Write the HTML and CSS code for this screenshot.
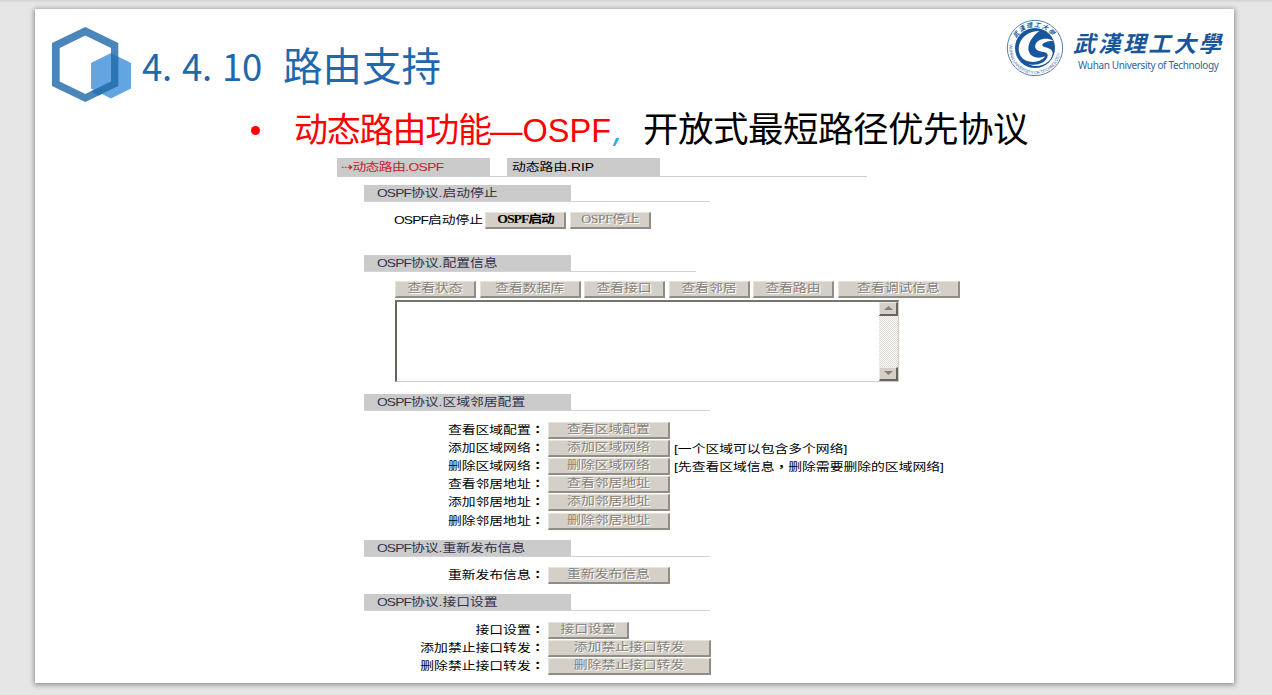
FILE: index.html
```html
<!DOCTYPE html>
<html lang="zh-CN">
<head>
<meta charset="utf-8">
<title>4.4.10 路由支持</title>
<link rel="stylesheet" href="styles.css">
</head>
<body>
<main class="slide">
  <header class="head">
    <svg class="hex" width="82" height="78" viewBox="0 0 82 78">
      <path fill="#4a86ba" fill-rule="evenodd" d="M34.300 1L67.300 17V60L34.300 76L1 60V17ZM34.300 9.500L8.700 22V55.500L34.300 68L60 55.500V22Z"/>
      <path fill="#62a5e1" d="M60 27L80 37V62.500L60 72.500L40 62.500V37Z"/>
      <path fill="#2d74b4" d="M60 27L67.300 30.750V60L47.500 69.500L40 65.300L60 55.500Z"/>
    </svg>
    <h1 class="title"><span class="cell">4</span><span class="cell">.</span><span class="cell">4</span><span class="cell">.</span><span class="cell">1</span><span class="cell">0</span><span class="han">路由支持</span></h1>
    <div class="brand">
      <svg class="seal" width="58" height="58" viewBox="0 0 174 174">
        <defs>
          <path id="arcTop" d="M31 58A63 63 0 0 1 143 58"/>
          <path id="arcLow" d="M11 76A77 77 0 1 0 163 76"/>
        </defs>
        <circle cx="87" cy="87" r="83" fill="#fff" stroke="#5681b4" stroke-width="3"/>
        <circle cx="87" cy="87" r="60" fill="#17569c"/>
        <path fill="#fff" d="M100 36C66 36 39 58 38 88C38 104 45 117 58 124C80 134 108 128 117 112C98 120 76 116 69 99C62 79 76 53 100 36Z"/>
        <path fill="#fff" d="M142 65C120 54 96 60 88 77C84 91 98 97 112 99C124 101 127 106 124 115C116 134 88 143 66 134C94 151 136 136 140 103C140 91 127 87 116 84C104 80 105 68 142 65Z"/>
        <text class="seal-top"><textPath href="#arcTop">武漢理工大學</textPath></text>
        <text class="seal-low"><textPath href="#arcLow">WUHAN UNIVERSITY OF TECHNOLOGY</textPath></text>
      </svg>
      <div class="names">
        <div class="cn">武漢理工大學</div>
        <div class="en">Wuhan University of Technology</div>
      </div>
    </div>
  </header>
  <div class="lead"><i class="dot"></i><span class="red">动态路由功能</span><span class="ospf">—OSPF</span><span class="comma">,</span><span class="black">开放式最短路径优先协议</span></div>

  <section class="panel">
    <nav class="tabs">
      <div class="tab active"><span class="t">⇢动态路由.OSPF</span></div>
      <div class="tab"><span class="t">动态路由.RIP</span></div>
    </nav>

    <h2 class="bar"><span class="t"><span class="latin">OSPF</span>协议.启动停止</span></h2>
    <div class="row start">
      <div class="lab"><span class="t"><span class="latin">OSPF</span>启动停止</span></div>
      <div class="btn on"><span class="t">OSPF启动</span></div>
      <div class="btn stop"><span class="t">OSPF停止</span></div>
    </div>

    <h2 class="bar short info"><span class="t"><span class="latin">OSPF</span>协议.配置信息</span></h2>
    <div class="row tools">
      <div class="btn"><span class="t">查看状态</span></div>
      <div class="btn w5"><span class="t">查看数据库</span></div>
      <div class="btn"><span class="t">查看接口</span></div>
      <div class="btn"><span class="t">查看邻居</span></div>
      <div class="btn"><span class="t">查看路由</span></div>
      <div class="btn w6"><span class="t">查看调试信息</span></div>
    </div>
    <div class="box">
      <div class="scroll">
        <div class="arrow"><svg width="9" height="4" viewBox="0 0 9 4"><path d="M0 4L4.500 0L9 4Z" fill="#848078"/></svg></div>
        <div class="arrow"><svg width="9" height="4" viewBox="0 0 9 4"><path d="M0 0L4.500 4L9 0Z" fill="#848078"/></svg></div>
      </div>
    </div>

    <h2 class="bar area"><span class="t"><span class="latin">OSPF</span>协议.区域邻居配置</span></h2>
    <div class="form">
      <div class="row"><div class="lab"><span class="t">查看区域配置<span class="mid" lang="zh-TW">：</span></span></div><div class="btn w6"><span class="t">查看区域配置</span></div></div>
      <div class="row"><div class="lab"><span class="t">添加区域网络<span class="mid" lang="zh-TW">：</span></span></div><div class="btn w6"><span class="t">添加区域网络</span></div><div class="note"><span class="t">[一个区域可以包含多个网络]</span></div></div>
      <div class="row"><div class="lab"><span class="t">删除区域网络<span class="mid" lang="zh-TW">：</span></span></div><div class="btn w6"><span class="t">删除区域网络</span></div><div class="note"><span class="t">[先查看区域信息<span class="mid" lang="zh-TW">，</span>删除需要删除的区域网络]</span></div></div>
      <div class="row"><div class="lab"><span class="t">查看邻居地址<span class="mid" lang="zh-TW">：</span></span></div><div class="btn w6"><span class="t">查看邻居地址</span></div></div>
      <div class="row"><div class="lab"><span class="t">添加邻居地址<span class="mid" lang="zh-TW">：</span></span></div><div class="btn w6"><span class="t">添加邻居地址</span></div></div>
      <div class="row"><div class="lab"><span class="t">删除邻居地址<span class="mid" lang="zh-TW">：</span></span></div><div class="btn w6"><span class="t">删除邻居地址</span></div></div>
    </div>

    <h2 class="bar pub"><span class="t"><span class="latin">OSPF</span>协议.重新发布信息</span></h2>
    <div class="form">
      <div class="row"><div class="lab"><span class="t">重新发布信息<span class="mid" lang="zh-TW">：</span></span></div><div class="btn w6"><span class="t">重新发布信息</span></div></div>
    </div>

    <h2 class="bar port"><span class="t"><span class="latin">OSPF</span>协议.接口设置</span></h2>
    <div class="form">
      <div class="row"><div class="lab"><span class="t">接口设置<span class="mid" lang="zh-TW">：</span></span></div><div class="btn"><span class="t">接口设置</span></div></div>
      <div class="row"><div class="lab"><span class="t">添加禁止接口转发<span class="mid" lang="zh-TW">：</span></span></div><div class="btn w8"><span class="t">添加禁止接口转发</span></div></div>
      <div class="row"><div class="lab"><span class="t">删除禁止接口转发<span class="mid" lang="zh-TW">：</span></span></div><div class="btn w8"><span class="t">删除禁止接口转发</span></div></div>
    </div>
  </section>
</main>
</body>
</html>
```
FILE: styles.css
```css
* { box-sizing: border-box; }
body {
  margin: 0;
  height: 695px;
  overflow: hidden;
  padding: 9px 0 0 35px;
  background: linear-gradient(#d2d2d2, #e6e6e6 3px);
  font-family: "Liberation Sans", "Noto Sans CJK SC", sans-serif;
}
.slide {
  width: 1199px;
  height: 674px;
  background: #fff;
  box-shadow: 0 1px 5px 1px rgba(0, 0, 0, .38);
}
.head { display: flex; height: 92px; padding-left: 16px; }
.hex { margin-top: 17px; flex: none; }
.title {
  display: flex;
  align-items: baseline;
  flex: none;
  width: 330px;
  margin: 27px 0 0 9px;
  height: 56px;
  font: 400 36.5px/56px "Noto Sans CJK SC", sans-serif;
  color: #1f68ab;
}
.cell { width: 20px; flex: none; }
.han { font-size: 39.5px; margin-left: 21px; white-space: nowrap; }
.brand { display: flex; flex: none; margin: 10px 0 0 534px; color: #17569c; }
.seal { flex: none; }
.seal-top { font: italic 700 18px "Noto Sans CJK SC", sans-serif; letter-spacing: 4px; fill: #17569c; }
.seal-low { font: 13px "Liberation Sans", sans-serif; letter-spacing: -.2px; fill: #3a6ba6; }
.names { margin-left: 9px; width: 160px; }
.cn {
  font: italic 700 22.5px/30px "Noto Sans CJK SC", sans-serif;
  letter-spacing: 2.6px;
  margin-top: 8px;
  white-space: nowrap;
}
.en {
  font: 10px/14px "Noto Sans", sans-serif;
  margin: 1px 0 0 5px;
  letter-spacing: -.36px;
  white-space: nowrap;
  color: #2e659f;
}
.lead {
  display: flex;
  align-items: baseline;
  height: 50px;
  line-height: 52px;
  padding-left: 216px;
  white-space: nowrap;
}
.dot { align-self: flex-start; width: 9px; height: 9px; margin: 25px 34px 0 0; border-radius: 50%; background: #f00; }
.red { width: 196px; font: 34px/52px "Noto Sans CJK SC", sans-serif; letter-spacing: -1.2px; color: #f00; }
.ospf { width: 122px; font-size: 32.5px; color: #f00; }
.comma { width: 31px; padding-left: 2px; font: italic 32px/52px "Noto Sans", sans-serif; color: #35a8e4; }
.black { font: 35.5px/52px "Noto Sans CJK SC", sans-serif; letter-spacing: -.5px; color: #000; }

.panel { width: 640px; margin: 7px 0 0 302px; color: #000; font-size: 11.5px; }
.t { display: inline-block; white-space: nowrap; transform: scaleX(1.2); transform-origin: 0 50%; }
.latin { letter-spacing: -.75px; }
.mid { font-family: "Noto Sans CJK TC", sans-serif; font-weight: 700; line-height: 1; }
.tabs { display: flex; gap: 17px; width: 530px; height: 19px; border-bottom: 1px solid #cbcbcb; }
.tab { width: 153px; height: 19px; background: #cbcbcb; line-height: 18px; padding-left: 5px; }
.tab.active { color: #c8202a; padding-left: 4px; letter-spacing: -.5px; }
.bar {
  width: 346px;
  height: 17px;
  margin: 8px 0 0 27px;
  padding-left: 13px;
  border-bottom: 1px solid #d2d2d8;
  background: linear-gradient(#cbcbcb, #cbcbcb) 0 0 / 207px 17px no-repeat border-box;
  font-size: 11.5px;
  font-weight: 400;
  line-height: 16px;
  color: #33304a;
}
.bar.short { width: 332px; }
.bar.info { margin-top: 25px; }
.bar.area { margin-top: 12px; }
.bar.pub { margin-top: 8.8px; }
.bar.port { margin-top: 8.8px; }
.row { display: flex; height: 18.2px; }
.start { margin: 9.800px 0 0 57px; gap: 4px; }
.start .lab { width: 87px; }
.tools { margin: 9px 0 0 58px; gap: 3.500px; height: 19px; }
.lab { line-height: 16px; flex: none; }
.btn {
  width: 81px;
  height: 17px;
  flex: none;
  overflow: hidden;
  background: #d4d0c8;
  border: solid;
  border-width: 1px 2px 2px 1px;
  border-color: #e6e3dd #908d86 #908d86 #e6e3dd;
  color: #85827b;
  text-shadow: 1px 1px 0 #fff;
  line-height: 13px;
  text-align: center;
  font-family: "Liberation Serif", "Noto Sans CJK SC", serif;
}
.btn .t { transform-origin: 50% 50%; }
.btn.on { color: #000; text-shadow: none; font-weight: 700; letter-spacing: -.9px; }
.btn.stop { letter-spacing: -.4px; }
.w5 { width: 101px; }
.w6 { width: 122px; }
.w8 { width: 163px; }
.box {
  display: flex;
  justify-content: flex-end;
  width: 504px;
  height: 82px;
  margin-left: 58px;
  border: solid;
  border-width: 2px 1px 1px 2px;
  border-color: #77746f #d0cdc8 #d0cdc8 #66645f;
}
.scroll {
  display: flex;
  flex-direction: column;
  justify-content: space-between;
  width: 19px;
  background: repeating-conic-gradient(#dedbd5 0 25%, #fafafa 0 50%) 0 0 / 2px 2px;
}
.arrow {
  display: flex;
  align-items: center;
  justify-content: center;
  height: 14px;
  background: #d4d0c8;
  border: solid;
  border-width: 1px 2px 2px 1px;
  border-color: #eceae6 #66645f #66645f #eceae6;
}
.form { padding-top: 10.6px; }
.form .lab { width: 211px; text-align: right; padding-right: 4px; }
.form .lab .t { transform-origin: 100% 50%; }
.note { padding-left: 4px; line-height: 18px; }
```
